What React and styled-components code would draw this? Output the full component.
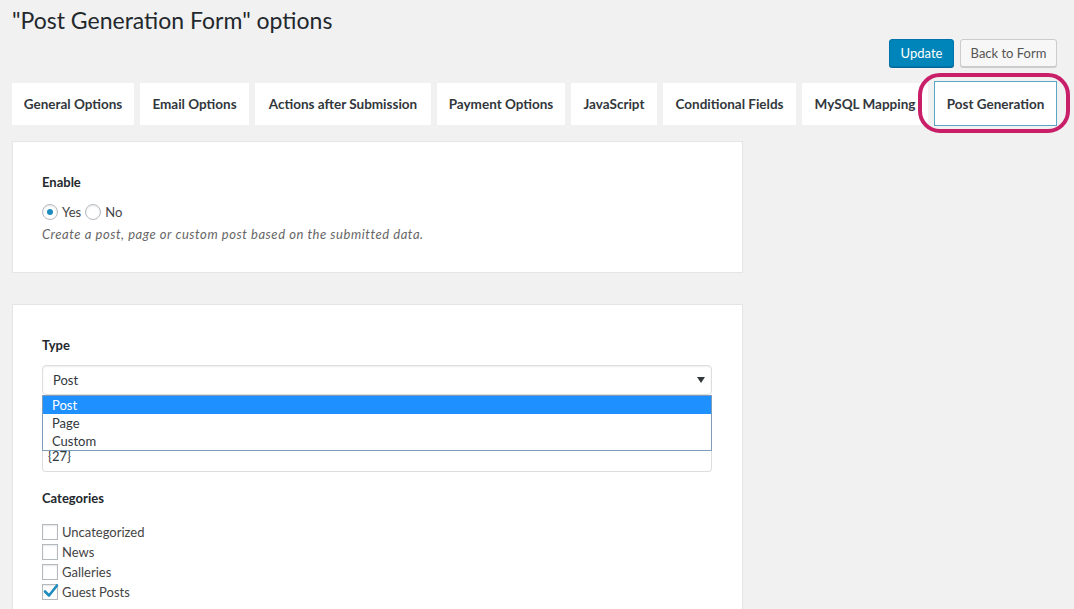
import React from "react";
import styled, { createGlobalStyle } from "styled-components";

const Global = createGlobalStyle`
  html, body { margin: 0; padding: 0; background: #f1f1f1; }
  body { font-family: "Lato", "Noto Sans", sans-serif; color: #444; font-size: 13px; }
  * { box-sizing: border-box; }
`;

const Page = styled.div`
  padding: 0 17px 0 12px;
  width: 1074px;
  height: 609px;
  overflow: hidden;
`;

const Title = styled.h1`
  margin: 0;
  padding-top: 6px;
  font-size: 23px;
  font-weight: 400;
  line-height: 29px;
  color: #23282d;
`;

const Actions = styled.div`
  display: flex;
  justify-content: flex-end;
  gap: 6px;
  margin-top: 4px;
`;

const Button = styled.button`
  height: 28px;
  padding: 0 0 1px;
  font-family: inherit;
  font-size: 13px;
  white-space: nowrap;
  border-radius: 3px;
  border: 1px solid ${(p) => (p.$primary ? "#0073aa" : "#cccccc")};
  background: ${(p) => (p.$primary ? "#0085ba" : "#f7f7f7")};
  color: ${(p) => (p.$primary ? "#ffffff" : "#555555")};
  box-shadow: ${(p) => (p.$primary ? "0 1px 0 #006799" : "0 1px 0 #cccccc")};
  width: ${(p) => p.$w}px;
`;

const Tabs = styled.div`
  position: relative;
  display: flex;
  align-items: center;
  gap: 6px;
  margin-top: 14px;
  height: 45px;
`;

const Tab = styled.div`
  width: ${(p) => p.$w}px;
  height: ${(p) => (p.$active ? 45 : 42)}px;
  background: #fff;
  border: 1px solid ${(p) => (p.$active ? "#5aa6c5" : "#fff")};
  display: flex;
  align-items: center;
  justify-content: center;
  font-weight: 700;
  font-size: 13.5px;
  color: #32373c;
  white-space: nowrap;
  overflow: hidden;
`;

const Ring = styled.div`
  position: absolute;
  left: 906px;
  top: -8px;
  width: 152px;
  height: 60px;
  border: 4px solid #c91f69;
  border-radius: 22px;
  pointer-events: none;
`;

const Panel = styled.div`
  width: 731px;
  background: #fff;
  border: 1px solid #e5e5e5;
  padding: 31px 30px 31px 29px;
  margin-top: ${(p) => p.$mt}px;
  height: ${(p) => p.$h}px;
`;

const Label = styled.div`
  font-weight: 700;
  font-size: 13px;
  color: #23282d;
  line-height: 18px;
`;

const RadioRow = styled.div`
  display: flex;
  align-items: center;
  margin-top: 12px;
  height: 18px;
`;

const Radio = styled.span`
  width: 16px;
  height: 16px;
  border-radius: 50%;
  border: 1px solid #b4b9be;
  box-shadow: inset 0 1px 2px rgba(0, 0, 0, 0.1);
  display: inline-flex;
  align-items: center;
  justify-content: center;
  margin-right: 4px;
  margin-left: ${(p) => (p.$gap ? 4 : 0)}px;
  &::after {
    content: "";
    width: 6px;
    height: 6px;
    border-radius: 50%;
    background: ${(p) => (p.$on ? "#1e8cbe" : "transparent")};
  }
`;

const OptText = styled.span`
  font-size: 13px;
  color: #444;
`;

const Desc = styled.p`
  margin: 4px 0 0;
  font-style: italic;
  font-size: 13px;
  letter-spacing: 0.55px;
  color: #666;
  line-height: 18px;
`;

const Field = styled.div`
  position: relative;
  margin-top: 11px;
  width: 670px;
`;

const Select = styled.div`
  height: 30px;
  border: 1px solid #dddddd;
  border-radius: 4px;
  box-shadow: inset 0 1px 2px rgba(0, 0, 0, 0.07);
  display: flex;
  align-items: center;
  justify-content: space-between;
  padding: 0 6px 0 10px;
  font-size: 13px;
  color: #32373c;
`;

const Arrow = styled.span`
  width: 0;
  height: 0;
  border-left: 4px solid transparent;
  border-right: 4px solid transparent;
  border-top: 6px solid #32373c;
`;

const Textarea = styled.div`
  height: 77px;
  border: 1px solid #dddddd;
  border-top: none;
  border-radius: 0 0 4px 4px;
  padding: 52px 0 0 5px;
  font-size: 13px;
  color: #32373c;
  line-height: 18px;
`;

const List = styled.div`
  position: absolute;
  left: 0;
  right: 0;
  top: 30px;
  border: 1px solid #7f9db9;
  background: #fff;
`;

const Option = styled.div`
  height: 18px;
  line-height: 18px;
  padding-left: 9px;
  font-size: 13px;
  background: ${(p) => (p.$sel ? "#1e90ff" : "#fff")};
  color: ${(p) => (p.$sel ? "#fff" : "#32373c")};
`;

const CatLabel = styled(Label)`
  margin-top: 17px;
`;

const Checks = styled.div`
  display: flex;
  flex-direction: column;
  gap: 4px;
  margin-top: 17px;
`;

const CheckRow = styled.label`
  display: flex;
  align-items: center;
  height: 16px;
  font-size: 13px;
  color: #444;
`;

const Box = styled.span`
  width: 16px;
  height: 16px;
  border: 1px solid #b4b9be;
  box-shadow: inset 0 1px 2px rgba(0, 0, 0, 0.1);
  margin-right: 4px;
  display: inline-flex;
  align-items: center;
  justify-content: center;
  position: relative;
`;

const Tick = styled.svg`
  position: absolute;
  left: -1px;
  top: -3px;
`;

const tabs = [
  ["General Options", 122],
  ["Email Options", 109],
  ["Actions after Submission", 176],
  ["Payment Options", 128],
  ["JavaScript", 86],
  ["Conditional Fields", 133],
  ["MySQL Mapping", 126],
];

const cats = [
  ["Uncategorized", false],
  ["News", false],
  ["Galleries", false],
  ["Guest Posts", true],
];

export default function App() {
  return (
    <>
      <Global />
      <Page>
        <Title>"Post Generation Form" options</Title>
        <Actions>
          <Button $primary $w={65}>Update</Button>
          <Button $w={97}>Back to Form</Button>
        </Actions>
        <Tabs>
          {tabs.map(([t, w]) => (
            <Tab key={t} $w={w}>{t}</Tab>
          ))}
          <Tab $active $w={123}>Post Generation</Tab>
          <Ring />
        </Tabs>
        <Panel $mt={15} $h={132}>
          <Label>Enable</Label>
          <RadioRow>
            <Radio $on />
            <OptText>Yes</OptText>
            <Radio $gap />
            <OptText>No</OptText>
          </RadioRow>
          <Desc>Create a post, page or custom post based on the submitted data.</Desc>
        </Panel>
        <Panel $mt={31} $h={320}>
          <Label>Type</Label>
          <Field>
            <Select>
              <span>Post</span>
              <Arrow />
            </Select>
            <Textarea>{"{27}"}</Textarea>
            <List>
              <Option $sel>Post</Option>
              <Option>Page</Option>
              <Option>Custom</Option>
            </List>
          </Field>
          <CatLabel>Categories</CatLabel>
          <Checks>
            {cats.map(([c, on]) => (
              <CheckRow key={c}>
                <Box>
                  {on && (
                    <Tick width="18" height="18" viewBox="0 0 18 18">
                      <path d="M3 9.5 L7 13.5 L15 3.5" fill="none" stroke="#1e8cbe" strokeWidth="2.6" strokeLinecap="round" strokeLinejoin="round" />
                    </Tick>
                  )}
                </Box>
                {c}
              </CheckRow>
            ))}
          </Checks>
        </Panel>
      </Page>
    </>
  );
}
